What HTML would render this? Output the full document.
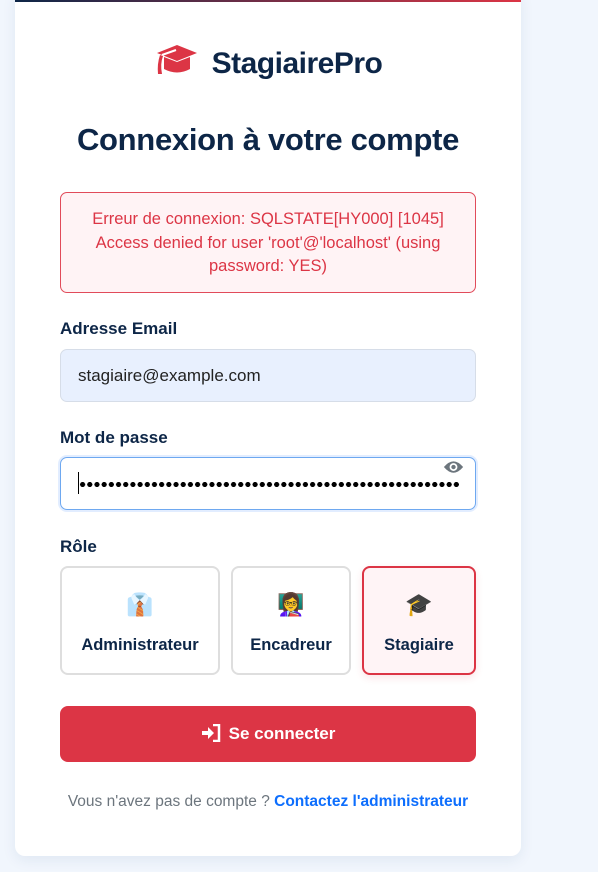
<!DOCTYPE html>
<html><head><meta charset="utf-8"><style>
*{box-sizing:border-box;margin:0;padding:0}
body{width:598px;height:872px;background:#f1f6fd;font-family:"Liberation Sans",sans-serif;position:relative;overflow:hidden;color:#0d2647}
.card{position:absolute;left:15px;top:-10px;width:506px;height:866px;background:#fff;border-radius:10px;box-shadow:0 4px 14px rgba(30,60,110,.08);overflow:hidden}
.card:before{content:"";position:absolute;left:0;top:10px;width:100%;height:2px;background:linear-gradient(90deg,#0d2647,#dc3545)}
.a{position:absolute}
.logo{left:0;width:536px;top:44px;text-align:center;font-weight:bold;font-size:30px;color:#0d2647;letter-spacing:-0.5px}
h1{position:absolute;left:0;width:536px;top:122px;text-align:center;font-size:31px;font-weight:bold;color:#0d2647;letter-spacing:-0.3px}
.err{left:60px;top:192px;width:416px;height:101px;border:1px solid #e14b5a;background:#fff3f5;border-radius:7px;color:#dc3545;font-size:16.5px;line-height:23.5px;text-align:center;padding:15px 4px 0;white-space:nowrap}
.lbl{left:60px;font-size:17px;font-weight:bold;color:#0d2647}
.inp{left:60px;width:416px;height:53px;border-radius:7px}
.role{top:566px;height:109px;border:2px solid #dedede;border-radius:8px;text-align:center;font-size:16.5px;font-weight:bold;color:#0d2647}
.role .ic{position:absolute;left:0;width:100%;top:24px;font-size:22px}
.role .t{position:absolute;left:0;width:100%;top:68px}
.btn{left:60px;top:706px;width:416px;height:56px;background:#dc3545;border-radius:8px;color:#fff;font-weight:bold;font-size:17px;text-align:center;line-height:56px}
</style></head><body>
<div class="card"></div>
<div class="a logo"><svg width="46" height="34" viewBox="0 0 46 34" style="vertical-align:-5px;margin-right:12px"><path d="M3 9 L23 1 L43 9 L23 17 Z" fill="#dc3545"/><path d="M10 13 V25 Q23 32 36 25 V13 L23 18 Z" fill="#dc3545"/><path d="M8 11 L22 6" stroke="#fff" stroke-width="2"/><path d="M6 11 Q3 20 4 30 L8 30 Q6 20 9 12Z" fill="#dc3545"/></svg>StagiairePro</div>
<h1>Connexion à votre compte</h1>
<div class="a err">Erreur de connexion: SQLSTATE[HY000] [1045]<br>Access denied for user 'root'@'localhost' (using<br>password: YES)</div>
<div class="a lbl" style="top:319px">Adresse Email</div>
<div class="a inp" style="top:349px;background:#e8f0fe;border:1px solid #d6dde8;font-size:17px;color:#222;padding:16px 17px">stagiaire@example.com</div>
<div class="a lbl" style="top:428px">Mot de passe</div>
<div class="a inp" style="top:457px;border:1px solid #6ea8f0;box-shadow:0 0 0 2px rgba(13,110,253,.12)"></div>
<div class="a" style="left:78px;top:472px;width:1px;height:22px;background:#000"></div>
<div class="a" style="left:79px;top:481px;width:380px;height:7px;background:radial-gradient(circle,#000 2.4px,transparent 2.7px) 0 0/7.2px 7px repeat-x"></div>
<svg class="a" style="left:443px;top:459px" width="21" height="16" viewBox="0 0 24 18"><path d="M1 9 Q12 -4 23 9 Q12 22 1 9Z" fill="#6c757d"/><circle cx="12" cy="9" r="4.5" fill="#fff"/><circle cx="12" cy="9" r="2.5" fill="#6c757d"/></svg>
<div class="a lbl" style="top:537px">Rôle</div>
<div class="a role" style="left:60px;width:160px"><div class="ic">👔</div><div class="t">Administrateur</div></div>
<div class="a role" style="left:231px;width:120px"><div class="ic">👩‍🏫</div><div class="t">Encadreur</div></div>
<div class="a role" style="left:362px;width:114px;border-color:#dc3545;background:#fff4f6;box-shadow:0 3px 8px rgba(220,53,69,.12)"><div class="ic">🎓</div><div class="t">Stagiaire</div></div>
<div class="a btn"><svg width="20" height="18" viewBox="0 0 20 18" style="vertical-align:-3px;margin-right:8px"><path d="M1 7 H7 V3 L13 9 L7 15 V11 H1Z" fill="#fff"/><path d="M12 1 H18 V17 H12" stroke="#fff" stroke-width="2.5" fill="none"/></svg>Se connecter</div>
<div class="a" style="left:0;width:536px;top:793px;text-align:center;font-size:15.5px;color:#6c757d">Vous n'avez pas de compte ? <b style="color:#0d6efd">Contactez l'administrateur</b></div>
</body></html>
